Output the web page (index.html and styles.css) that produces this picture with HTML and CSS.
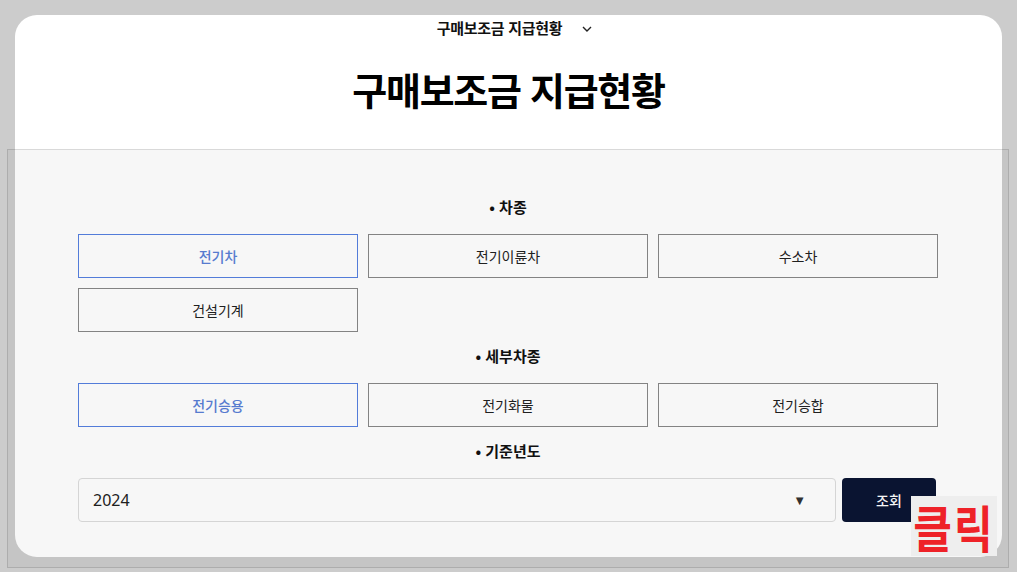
FILE: index.html
```html
<!DOCTYPE html>
<html lang="ko">
<head>
<meta charset="utf-8">
<title>구매보조금 지급현황</title>
<link rel="stylesheet" href="styles.css">
</head>
<body>
<div class="card">
  <div class="nav">
    <span class="nav-title">구매보조금 지급현황</span>
    <svg class="chev" width="10" height="6" viewBox="0 0 10 6"><polyline points="1,1 5,5 9,1" fill="none" stroke="#222" stroke-width="1.4"/></svg>
  </div>
  <h1 class="title">구매보조금 지급현황</h1>
  <div class="form">
    <div class="label">• 차종</div>
    <div class="grid">
      <button class="opt active">전기차</button>
      <button class="opt">전기이륜차</button>
      <button class="opt">수소차</button>
      <button class="opt">건설기계</button>
    </div>
    <div class="label">• 세부차종</div>
    <div class="grid">
      <button class="opt active">전기승용</button>
      <button class="opt">전기화물</button>
      <button class="opt">전기승합</button>
    </div>
    <div class="label">• 기준년도</div>
    <div class="search">
      <div class="select"><span>2024</span><span class="arrow">▼</span></div>
      <button class="go">조회</button>
    </div>
  </div>
</div>
<div class="highlight"></div>
<div class="click-tag"><span>클릭</span></div>
</body>
</html>
```

FILE: styles.css
```css
html, body {
  margin: 0;
  padding: 0;
}
body {
  background: #cccccc;
  width: 1017px;
  height: 572px;
  overflow: hidden;
  position: relative;
  font-family: "Noto Sans CJK KR", "Noto Sans", sans-serif;
  color: #111;
}
.card {
  margin: 15px 0 0 15px;
  width: 987px;
  height: 542px;
  background: #ffffff;
  border-radius: 22px;
  overflow: hidden;
  box-sizing: border-box;
}
.nav {
  display: flex;
  justify-content: center;
  align-items: center;
  gap: 20px;
  height: 26px;
  padding-left: 12px;
}
.nav-title {
  font-size: 15px;
  font-weight: 700;
  letter-spacing: -0.3px;
  line-height: 26px;
}
.chev {
  margin-top: 1px;
}
.title {
  margin: 0;
  text-align: center;
  font-size: 38px;
  font-weight: 700;
  letter-spacing: -1.3px;
  line-height: 44px;
  padding-top: 26px;
  height: 82px;
  color: #000;
}
.form {
  padding: 48px 64px 0 63px;
}
.label {
  text-align: center;
  font-size: 15px;
  font-weight: 700;
  line-height: 20px;
  margin-bottom: 17px;
  color: #111;
}
.grid + .label {
  margin-top: 14px;
}
.grid {
  display: grid;
  grid-template-columns: repeat(3, 1fr);
  column-gap: 10px;
  row-gap: 10px;
}
.opt {
  height: 44px;
  background: #fff;
  border: 1px solid #888;
  font-family: inherit;
  font-size: 14px;
  color: #222;
  padding: 0;
}
.opt.active {
  border-color: #5680e0;
  color: #5a7fd6;
  font-weight: 500;
}
.search {
  display: flex;
  gap: 6px;
  width: 858px;
}
.select {
  flex: 1;
  height: 44px;
  box-sizing: border-box;
  background: #fff;
  border: 1px solid #dcdcdc;
  border-radius: 4px;
  display: flex;
  align-items: center;
  justify-content: space-between;
  padding: 0 29px 0 14px;
  font-size: 16px;
  color: #222;
  font-family: "Noto Sans", sans-serif;
}
.arrow {
  font-size: 13px;
  color: #333;
}
.go {
  width: 94px;
  height: 44px;
  background: #0b1533;
  color: #fff;
  border: none;
  border-radius: 4px;
  font-family: inherit;
  font-size: 14px;
  font-weight: 500;
}
.highlight {
  position: absolute;
  left: 7px;
  top: 149px;
  width: 1000px;
  height: 417px;
  background: rgba(0, 0, 0, 0.03);
  border: 1px solid rgba(0, 0, 0, 0.12);
}
.click-tag {
  position: absolute;
  left: 911px;
  top: 496px;
  width: 86px;
  height: 60px;
  background: #eeeeee;
  color: #ee2228;
  font-size: 42px;
  font-weight: 700;
  line-height: 60px;
  text-align: center;
  letter-spacing: 2px;
}
.click-tag span {
  display: inline-block;
  transform: scaleY(1.2);
}
```
